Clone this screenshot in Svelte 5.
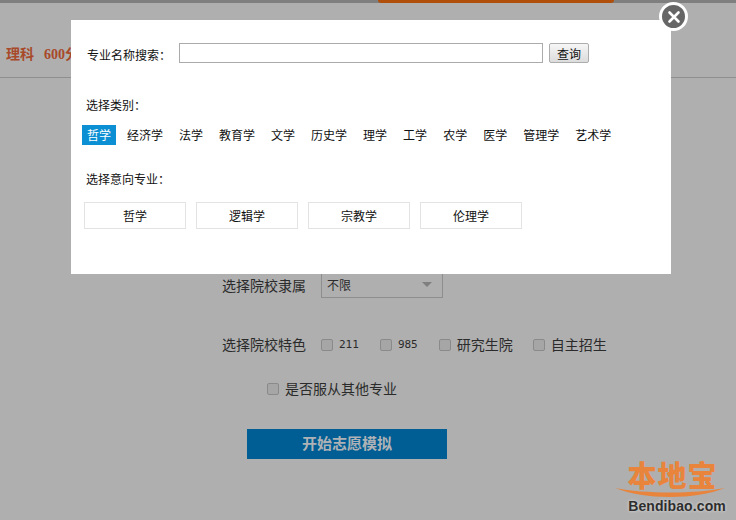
<script>
  const tabs = ['哲学','经济学','法学','教育学','文学','历史学','理学','工学','农学','医学','管理学','艺术学'];
  const majors = ['哲学','逻辑学','宗教学','伦理学'];
  const traits = [
    { label: '211', mono: true, gap: 'g1' },
    { label: '985', mono: true, gap: 'g1' },
    { label: '研究生院', mono: false, gap: 'g3' },
    { label: '自主招生', mono: false, gap: '' }
  ];
</script>

<div class="page">
  <div class="topbar"><div class="pill"></div></div>
  <header class="head"><b class="kind">理科</b><b class="score">600分</b></header>

  <section class="form">
    <div class="row r-select">
      <span class="label">选择院校隶属</span>
      <div class="select"><span>不限</span><i class="arrow"></i></div>
    </div>
    <div class="row r-traits">
      <span class="label up">选择院校特色</span>
      {#each traits as t}
        <label class="check {t.gap}"><input type="checkbox" /><span class="up" class:mono={t.mono}>{t.label}</span></label>
      {/each}
    </div>
    <div class="row r-obey">
      <label class="check"><input type="checkbox" /><span class="up">是否服从其他专业</span></label>
    </div>
    <button class="start">开始志愿模拟</button>
  </section>

  <div class="logo">
    <span class="logo-cn">本地宝</span>
    <svg class="swoosh" viewBox="0 0 110 10" width="110" height="10"><path d="M0 0 C30 6 80 6 110 0 C80 12 30 12 0 0Z" fill="#e8843c"/></svg>
    <span class="logo-en">Bendibao.com</span>
  </div>

  <div class="modal">
    <div class="search">
      <span class="down">专业名称搜索：</span>
      <input type="text" />
      <button class="query">查询</button>
    </div>
    <p class="title t-cat">选择类别：</p>
    <div class="tabs">
      {#each tabs as t, i}<span class="tab" class:on={i === 0}>{t}</span>{/each}
    </div>
    <p class="title t-major">选择意向专业：</p>
    <div class="cards">
      {#each majors as m}<span class="card">{m}</span>{/each}
    </div>
    <button class="close" aria-label="关闭">
      <svg viewBox="0 0 14 14" width="14" height="14"><path d="M2.5 2.5L11.5 11.5M11.5 2.5L2.5 11.5" stroke="#fff" stroke-width="2.6" stroke-linecap="round"/></svg>
    </button>
  </div>
</div>

<style>
  :global(body) { margin: 0; background: #afafaf; }
  .page {
    position: relative; width: 736px; height: 520px; overflow: hidden;
    background: #afafaf; color: #2b2b2b;
    font-family: "Liberation Sans", "Noto Sans CJK SC", sans-serif;
  }
  .topbar { height: 3px; background: #7f7f7f; padding-left: 378px; }
  .pill { width: 236px; height: 3px; background: #b04f0a; border-radius: 0 0 8px 8px; }
  .head {
    height: 75px; box-sizing: border-box; border-bottom: 1px solid #8f8f8f;
    padding: 44px 0 0 6px; line-height: 16px; color: #a8492a;
    font-family: "Liberation Serif", "Noto Sans CJK SC", serif; font-size: 14px;
  }
  .score { margin-left: 10px; }
  .form { padding-top: 193px; font-size: 14px; }
  .row { display: flex; align-items: center; }
  .up { padding-bottom: 2px; }
  .down { padding-top: 2px; }
  .r-select { height: 27px; padding-left: 222px; }
  .r-traits { height: 24px; margin-top: 35px; padding-left: 222px; }
  .r-traits input { margin-top: 2px; }
  .r-obey { height: 24px; margin-top: 20px; padding-left: 267px; }
  .label { width: 99px; flex: none; }
  .select {
    width: 122px; height: 27px; box-sizing: border-box; border: 1px solid #8e8e8e;
    border-top: 0; display: flex; align-items: center; justify-content: space-between;
    padding: 0 10px 0 5px; font-size: 12px;
  }
  .arrow {
    width: 0; height: 0; border: 5.5px solid transparent; border-top: 5px solid #7f7f7f;
    border-bottom: 0;
  }
  .check { display: flex; align-items: center; gap: 6px; }
  .check input {
    appearance: none; width: 12px; height: 12px; margin: 0; box-sizing: border-box;
    background: #a6a6a6; border: 1px solid #8a8a8a; border-radius: 2px;
  }
  .g1 { margin-right: 21px; }
  .g3 { margin-right: 20px; }
  .mono { font-family: "DejaVu Sans Mono", monospace; font-size: 11px; }
  .start {
    display: block; width: 200px; height: 30px; margin: 28px 0 0 247px; padding: 0 0 4px; border: 0;
    background: #005e94; color: #aeb2b6; font-weight: 700; font-size: 15px;
    font-family: "Liberation Serif", "Noto Sans CJK SC", serif;
  }
  .logo {
    position: absolute; left: 615px; top: 462px; width: 110px;
    display: flex; flex-direction: column; align-items: center;
  }
  .logo-cn { font-size: 29px; line-height: 31px; font-weight: 900; color: #e8843c; margin-left: 5px; letter-spacing: 1px; }
  .swoosh { margin-top: -5px; }
  .logo-en {
    font-size: 14px; line-height: 14px; font-weight: 700; color: #2e2e2e; margin-top: 1px; margin-left: 14px;
    text-shadow: 0 0 3px #e4e4e4; letter-spacing: .1px;
  }
  .modal {
    position: absolute; left: 71px; top: 20px; width: 600px; height: 254px;
    background: #fff; color: #111; font-size: 12px;
  }
  .search { display: flex; align-items: center; height: 20px; padding: 23px 0 0 16px; }
  .search span { width: 92px; flex: none; }
  .search input {
    width: 364px; height: 20px; box-sizing: border-box; margin: 0 6px 0 0;
    border: 1px solid #ababab; background: #fff; padding: 0;
  }
  .query {
    width: 40px; height: 20px; padding: 0; box-sizing: border-box; font-size: 12px; color: #111;
    border: 1px solid #adadad; border-radius: 2px; font-family: inherit;
    background: linear-gradient(#f6f6f6, #dcdcdc);
  }
  .title { margin: 0 0 0 15px; line-height: 16px; }
  .t-cat { padding-top: 35px; }
  .t-major { margin-top: 27px; }
  .tabs { display: flex; gap: 6px; margin: 11px 0 0 11px; }
  .tab { height: 20px; line-height: 22px; padding: 0 5px; }
  .tab.on { background: #0c8fd3; color: #fff; }
  .cards { display: flex; gap: 10px; margin: 14px 0 0 13px; }
  .card {
    width: 102px; height: 27px; box-sizing: border-box; border: 1px solid #e3e3e3;
    display: flex; align-items: center; justify-content: center;
  }
  .close {
    position: absolute; right: -17px; top: -18px; width: 29px; height: 29px; padding: 0;
    box-sizing: border-box; border: 3px solid #fff; border-radius: 50%; background: #666;
    display: flex; align-items: center; justify-content: center;
  }
</style>
